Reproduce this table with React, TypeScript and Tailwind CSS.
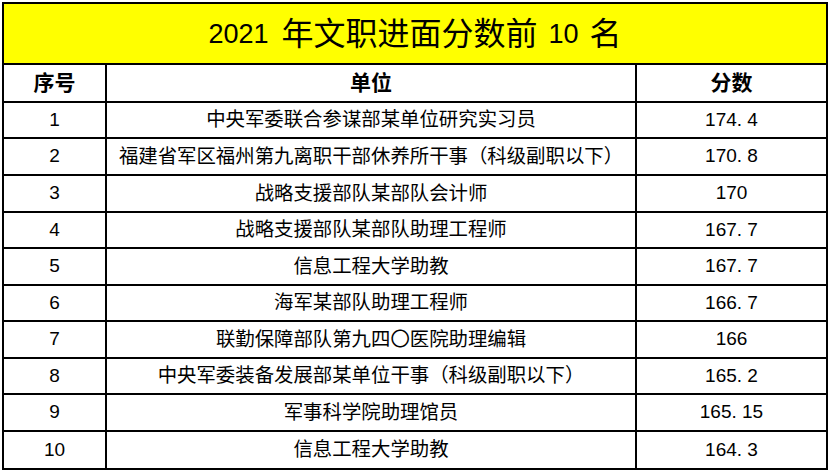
const rows: [string, string, string][] = [
  ['1', '中央军委联合参谋部某单位研究实习员', '174. 4'],
  ['2', '福建省军区福州第九离职干部休养所干事（科级副职以下）', '170. 8'],
  ['3', '战略支援部队某部队会计师', '170'],
  ['4', '战略支援部队某部队助理工程师', '167. 7'],
  ['5', '信息工程大学助教', '167. 7'],
  ['6', '海军某部队助理工程师', '166. 7'],
  ['7', '联勤保障部队第九四〇医院助理编辑', '166'],
  ['8', '中央军委装备发展部某单位干事（科级副职以下）', '165. 2'],
  ['9', '军事科学院助理馆员', '165. 15'],
  ['10', '信息工程大学助教', '164. 3'],
];

const heights = [
  'h-[36px]', 'h-[37px]', 'h-[37px]', 'h-[36px]', 'h-[37px]',
  'h-[36px]', 'h-[37px]', 'h-[36px]', 'h-[37px]', 'h-[36px]',
];

const font = "font-['Liberation_Sans','Noto_Sans_CJK_SC',sans-serif]";

export default function App() {
  return (
    <div className={`h-[474px] w-[830px] bg-white pl-[2px] pt-[2px] text-black ${font}`}>
      <div className="w-[826px] border-2 border-black">
        <div className="flex h-[61px] items-center justify-center border-b-2 border-black bg-[#ffff00] pt-[1px] text-[32px] leading-none">
          <span className="mr-[13px] text-[27px]">2021</span>
          <span>年文职进面分数前</span>
          <span className="mx-[11px] text-[27px]">10</span>
          <span>名</span>
        </div>
        <div className="grid h-[38px] grid-cols-[103px_530px_1fr] border-b-2 border-black text-[21px] font-bold">
          <div className="flex items-center justify-center border-r-2 border-black">序号</div>
          <div className="flex items-center justify-center border-r-2 border-black">单位</div>
          <div className="flex items-center justify-center">分数</div>
        </div>
        {rows.map(([no, unit, score], i) => (
          <div
            key={no}
            className={`grid grid-cols-[103px_530px_1fr] ${heights[i]} ${
              i < rows.length - 1 ? 'border-b-2 border-black' : ''
            }`}
          >
            <div className="flex items-center justify-center border-r-2 border-black text-[19px]">{no}</div>
            <div className="flex items-center justify-center border-r-2 border-black text-[19.4px]">{unit}</div>
            <div className="flex items-center justify-center text-[19px]">{score}</div>
          </div>
        ))}
      </div>
    </div>
  );
}
